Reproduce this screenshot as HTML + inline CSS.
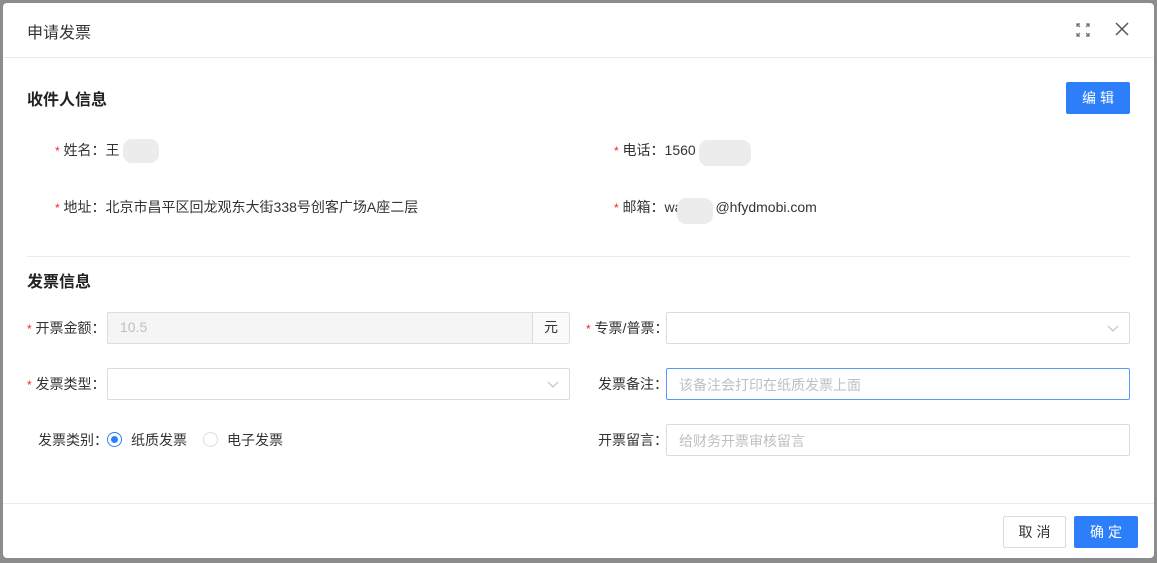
<!DOCTYPE html>
<html><head><meta charset="utf-8"><style>
*{box-sizing:border-box;margin:0;padding:0}
body{width:1157px;height:563px;background:#8c8c8c;font-family:"Liberation Sans","Noto Sans CJK SC",sans-serif;position:relative;overflow:hidden;color:#333;font-size:14px}
.m{position:absolute;left:3px;top:3px;width:1151px;height:555px;background:#fff;border-radius:4px}
.a{position:absolute;white-space:nowrap}
.s{color:#f5222d;font-size:12px}
.inp{position:absolute;height:32px;border:1px solid #dcdcdc;border-radius:2px;background:#fff}
.ph{position:absolute;left:12px;top:6px;color:#bfbfbf;font-size:14px}
.arr{position:absolute;right:10px;top:9px}
.blob{position:absolute;background:#ececec;border-radius:9px}
.lab{font-size:14px;color:#333}
</style></head><body>
<div class="m">
<div class="a" style="left:24px;top:16px;font-size:16px;color:#333">申请发票</div>
<svg class="a" style="left:1073px;top:20px" width="14" height="14" viewBox="0 0 14 14" fill="none" stroke="#666" stroke-width="1.2"><path d="M1 1l3 3M1 4V1h3M13 1l-3 3M13 4V1h-3M1 13l3-3M1 10v3h3M13 13l-3-3M13 10v3h-3"/></svg>
<svg class="a" style="left:1112px;top:19px" width="14" height="14" viewBox="0 0 14 14" stroke="#555" stroke-width="1.5"><path d="M1 1l12 12M13 1L1 13"/></svg>
<div class="a" style="left:0;top:54px;width:1151px;height:1px;background:#ebebeb"></div>

<div class="a" style="left:24px;top:83px;font-size:16px;font-weight:bold;color:#222">收件人信息</div>
<div class="a" style="left:1063px;top:79px;width:64px;height:32px;background:#2d7ff9;border-radius:2px;color:#fff;text-align:center;line-height:32px;letter-spacing:4px;text-indent:4px">编辑</div>

<div class="a lab" style="left:52px;top:137px"><span class="s">*</span> 姓名：王</div>
<div class="blob" style="left:120px;top:136px;width:36px;height:24px"></div>
<div class="a lab" style="left:611px;top:137px"><span class="s">*</span> 电话：1560</div>
<div class="blob" style="left:696px;top:137px;width:52px;height:26px"></div>
<div class="a lab" style="left:52px;top:194px"><span class="s">*</span> 地址：北京市昌平区回龙观东大街338号创客广场A座二层</div>
<div class="a lab" style="left:611px;top:194px"><span class="s">*</span> 邮箱：wa<span style="display:inline-block;width:33px"></span>@hfydmobi.com</div>
<div class="blob" style="left:674px;top:195px;width:36px;height:26px"></div>

<div class="a" style="left:24px;top:253px;width:1103px;height:1px;background:#ebebeb"></div>
<div class="a" style="left:24px;top:265px;font-size:16px;font-weight:bold;color:#222">发票信息</div>

<div class="a lab" style="left:24px;top:315px"><span class="s">*</span> 开票金额：</div>
<div class="inp" style="left:104px;top:309px;width:463px;background:#f5f5f5"><span class="ph">10.5</span>
<div style="position:absolute;right:0;top:0;width:37px;height:30px;border-left:1px solid #dcdcdc;background:#fafafa;text-align:center;line-height:29px;color:#333">元</div></div>
<div class="a lab" style="left:24px;top:371px"><span class="s">*</span> 发票类型：</div>
<div class="inp" style="left:104px;top:365px;width:463px"><svg class="arr" width="12" height="12" viewBox="0 0 12 12" fill="none" stroke="#bbb"><path d="M1 4l5 5 5-5"/></svg></div>
<div class="a lab" style="left:35px;top:427px">发票类别：</div>
<div class="a" style="left:104px;top:429px;width:15px;height:15px;border:1px solid #2d7ff9;border-radius:50%"><div style="position:absolute;left:3px;top:3px;width:7px;height:7px;border-radius:50%;background:#2d7ff9"></div></div>
<div class="a lab" style="left:128px;top:427px">纸质发票</div>
<div class="a" style="left:200px;top:429px;width:15px;height:15px;border:1px solid #dcdcdc;border-radius:50%"></div>
<div class="a lab" style="left:224px;top:427px">电子发票</div>

<div class="a lab" style="left:583px;top:315px"><span class="s">*</span> 专票/普票：</div>
<div class="inp" style="left:663px;top:309px;width:464px"><svg class="arr" width="12" height="12" viewBox="0 0 12 12" fill="none" stroke="#bbb"><path d="M1 4l5 5 5-5"/></svg></div>
<div class="a lab" style="left:595px;top:371px">发票备注：</div>
<div class="inp" style="left:663px;top:365px;width:464px;border-color:#5b9bf7"><span class="ph">该备注会打印在纸质发票上面</span></div>
<div class="a lab" style="left:595px;top:427px">开票留言：</div>
<div class="inp" style="left:663px;top:421px;width:464px"><span class="ph">给财务开票审核留言</span></div>

<div class="a" style="left:0;top:500px;width:1151px;height:1px;background:#ebebeb"></div>
<div class="a" style="left:1000px;top:513px;width:63px;height:32px;border:1px solid #dcdcdc;border-radius:2px;text-align:center;line-height:30px;letter-spacing:4px;text-indent:4px;color:#333">取消</div>
<div class="a" style="left:1071px;top:513px;width:64px;height:32px;background:#2d7ff9;border-radius:2px;text-align:center;line-height:32px;letter-spacing:4px;text-indent:4px;color:#fff">确定</div>
</div>
</body></html>
